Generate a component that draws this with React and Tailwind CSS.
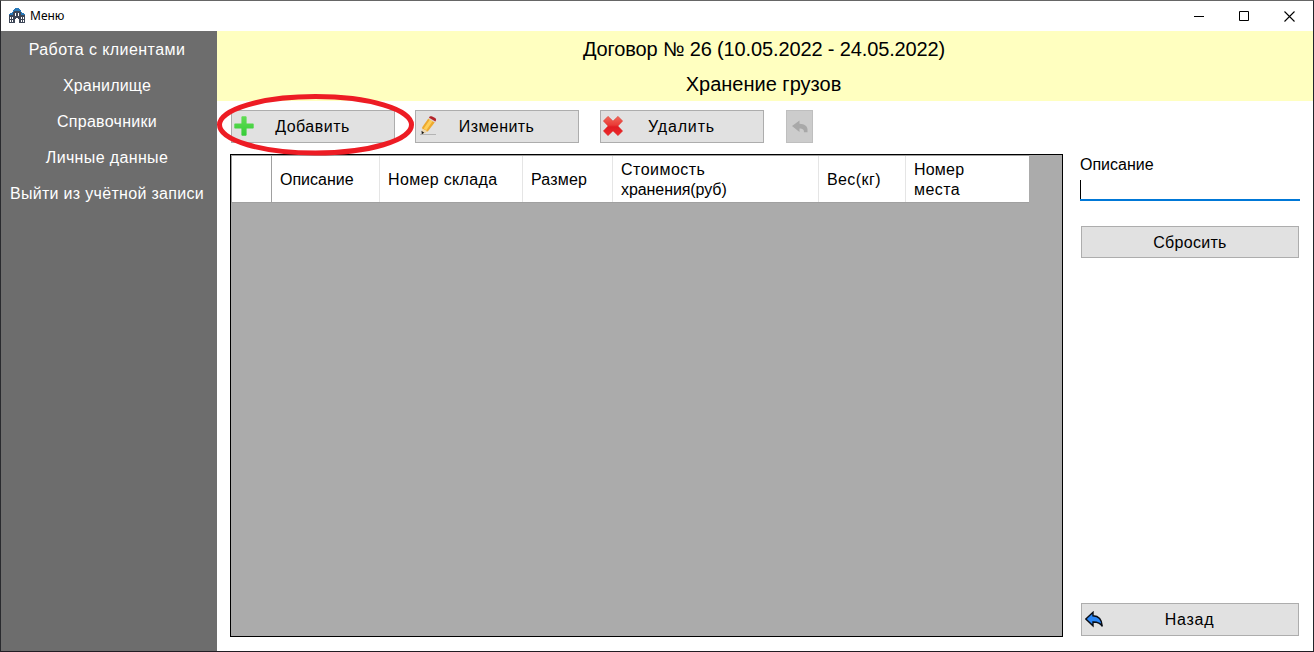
import React from "react";

const menu = [
  { label: "Работа с клиентами", cls: "tracking-[0.43px]" },
  { label: "Хранилище", cls: "tracking-[0.2px]" },
  { label: "Справочники", cls: "tracking-[0.3px]" },
  { label: "Личные данные", cls: "tracking-[0.36px]" },
  { label: "Выйти из учётной записи", cls: "tracking-[0.31px]" },
];

const columns = [
  { label: "Описание", cls: "w-[108px] border-r border-[#e5e5e5]" },
  { label: "Номер склада", cls: "w-[143px] border-r border-[#e5e5e5] tracking-[0.34px]" },
  { label: "Размер", cls: "w-[90px] border-r border-[#e5e5e5] tracking-[0.2px]" },
  { label: "Стоимость", second: "хранения(руб)", cls: "w-[206px] border-r border-[#e5e5e5]", firstCls: "tracking-[0.48px]", secondCls: "tracking-[-0.08px]" },
  { label: "Вес(кг)", cls: "w-[87px] border-r border-[#e5e5e5] tracking-[0.4px]" },
  { label: "Номер", second: "места", cls: "w-[123px]", firstCls: "tracking-[0.2px]", secondCls: "tracking-[0.45px]" },
];

function BuildingIcon() {
  return (
    <svg width="16" height="16" viewBox="0 0 16 16" shapeRendering="crispEdges">
      <path d="M5 1h6v3h1v3h4v8H0V7h4V4h1z" fill="#3d4657" />
      <path d="M6 0h4v1h1v1h1v2h-1V3H5v1H4V2h1V1h1zM3 4h1v1H3zM12 4h1v1h-1zM1 5h3v1H1zM12 5h3v1h-3zM0 6h4v1H0zM12 6h4v1h-4z" fill="#2878b8" />
      <path d="M6 5h1v3H6zM9 5h1v3H9zM1 9h1v2H1zM3 9h1v2H3zM12 9h1v2h-1zM14 9h1v2h-1zM1 12h1v2H1zM3 12h1v2H3zM12 12h1v2h-1zM14 12h1v2h-1zM7 10h2v1h1v4H6v-4h1z" fill="#fff" />
    </svg>
  );
}

function PlusIcon() {
  return (
    <svg width="20" height="20" viewBox="0 0 20 20">
      <defs>
        <linearGradient id="plus" x1="0" y1="0" x2="0" y2="1">
          <stop offset="0" stopColor="#62dd55" />
          <stop offset="1" stopColor="#35cc38" />
        </linearGradient>
      </defs>
      <path d="M8 0.3h4l.6.6v6.6h6.5l.6.6v3.8l-.6.6h-6.5v6.6l-.6.6H8l-.6-.6v-6.6H.9l-.6-.6V8.100l.6-.6h6.5V.9z" fill="url(#plus)" />
    </svg>
  );
}

function PencilIcon() {
  return (
    <svg width="18" height="20" viewBox="0 0 18 20">
      <path d="M0 18.500h16" stroke="#b4b4b4" strokeWidth="1" />
      <path d="M2 11.500L8.300 2.600l6.500 3.600L8 15.300 2 17.800z" fill="#eda92f" />
      <path d="M3.800 12.600L10 3.600l2.700 1.500-6.400 9.100z" fill="#ffcf58" />
      <path d="M1.900 12.200l5.600 3.100-5.500 2.600z" fill="#ecd8b4" />
      <path d="M1.500 14.800l2.700 1.900-2.400 1.500z" fill="#151515" />
      <path d="M8.300 2.700l.7-1 6.500 3.700-.7 1z" fill="#dfcfc4" />
      <path d="M9 1.800C9.500 0 11 0 12.200.5l3 1.600c1.200.8 1.100 2 .3 3.300z" fill="#b3242a" />
    </svg>
  );
}

function CrossIcon() {
  return (
    <svg width="20" height="20" viewBox="0 0 20 20">
      <defs>
        <linearGradient id="cross" x1="0" y1="0" x2="0" y2="1">
          <stop offset="0" stopColor="#f0695a" />
          <stop offset=".45" stopColor="#ea3a36" />
          <stop offset=".55" stopColor="#e01b22" />
          <stop offset="1" stopColor="#ee2a2c" />
        </linearGradient>
      </defs>
      <path d="M5 .3l5 4.700 5-4.700 4.700 4.700-4.700 5 4.700 5-4.700 4.700-5-4.700-5 4.700L.3 15 5 10 .3 5z" fill="url(#cross)" stroke="#d8423d" strokeWidth=".5" strokeLinejoin="round" />
    </svg>
  );
}

function UndoIcon() {
  return (
    <svg width="16" height="14" viewBox="0 0 16 14">
      <path d="M0 6L7.500.5V3.700C12.500 4 15.500 6 15.500 9.500v2.800h-3.600c.5-2.500-1.400-3.600-4.400-3.700v3.300z" fill="#a8a8a8" />
    </svg>
  );
}

function BackIcon() {
  return (
    <svg width="20" height="17" viewBox="0 0 20 17">
      <path d="M.8 8L8 1.300v3.500C13 5 16.800 8 17.300 15.300 15.500 12.300 13 10.800 8 11v3.800z" fill="#2a86f5" stroke="#080c14" strokeWidth="1.400" strokeLinejoin="miter" />
    </svg>
  );
}

function Button({ children, icon, className, textClass }) {
  return (
    <button className={"relative flex items-center justify-center border border-[#adadad] bg-[#e1e1e1] text-[16px] leading-[20px] " + className}>
      {icon}
      <span className={"whitespace-nowrap " + (textClass || "")}>{children}</span>
    </button>
  );
}

export default function App() {
  return (
    <div className="flex h-[652px] w-[1314px] flex-col overflow-hidden border border-t-[#666666] border-r-[#20242a] border-b-[#211d24] border-l-[#292a2e] bg-white font-['Liberation_Sans',sans-serif] text-black">
      <header className="flex h-[30px] shrink-0 items-center pl-2">
        <BuildingIcon />
        <span className="ml-[5px] font-['Noto_Sans','Open_Sans',sans-serif] text-[12px] leading-[16px]">Меню</span>
        <div className="ml-auto flex items-center">
          <div className="flex w-[46px] justify-center">
            <svg width="10" height="10" viewBox="0 0 10 10"><path d="M0 5.500h10" stroke="#000" /></svg>
          </div>
          <div className="flex w-[44px] justify-center">
            <svg width="10" height="10" viewBox="0 0 10 10"><path d="M.5.5h9v9h-9z" fill="none" stroke="#000" /></svg>
          </div>
          <div className="flex w-[47px] justify-center">
            <svg width="11" height="11" viewBox="0 0 11 11"><path d="M.5.500l10 10M10.500.5L.5 10.500" stroke="#000" strokeWidth="1.100" /></svg>
          </div>
        </div>
      </header>
      <div className="flex min-h-0 flex-1">
        <nav className="flex w-[216px] shrink-0 flex-col bg-[#6d6d6d] text-center text-[16px] text-white">
          {menu.map((m) => (
            <a key={m.label} className={"h-9 whitespace-nowrap pr-1 leading-[37px] " + m.cls}>{m.label}</a>
          ))}
        </nav>
        <main className="flex min-w-0 flex-1 flex-col">
          <div className="h-[70px] shrink-0 bg-[#ffffc0] text-center text-[20px]">
            <div className="h-[35px] pr-[2px] leading-[36px] tracking-[-0.13px]">Договор № 26 (10.05.2022 - 24.05.2022)</div>
            <div className="h-[35px] pr-[3px] leading-[36px]">Хранение грузов</div>
          </div>
          <div className="flex min-h-0 flex-1 justify-between pl-[13px] pr-[13px]">
            <section className="flex w-[833px] flex-col">
              <div className="flex h-[53px] items-start pl-px pt-[9px]">
                <div className="relative">
                  <Button className="h-[33px] w-[164px]" textClass="pr-px tracking-[0.5px]" icon={<span className="absolute left-[2px] top-[5px]"><PlusIcon /></span>}>
                    Добавить
                  </Button>
                  <svg className="absolute -left-[15px] -top-[17px] z-10" width="200" height="64" viewBox="0 0 200 64">
                    <ellipse cx="99.500" cy="31.800" rx="96" ry="28.200" fill="none" stroke="#ed1c24" strokeWidth="5" />
                  </svg>
                </div>
                <Button className="ml-5 h-[33px] w-[164px]" textClass="pr-px tracking-[0.4px]" icon={<span className="absolute left-[4px] top-[5px]"><PencilIcon /></span>}>
                  Изменить
                </Button>
                <Button className="ml-[21px] h-[33px] w-[164px]" textClass="pr-px tracking-[0.85px]" icon={<span className="absolute left-[2px] top-[5px]"><CrossIcon /></span>}>
                  Удалить
                </Button>
                <button className="ml-[22px] flex h-[33px] w-[27px] items-center justify-center border border-[#bfbfbf] bg-[#cccccc]">
                  <UndoIcon />
                </button>
              </div>
              <div className="h-[483px] border border-black bg-[#ababab]">
                <div className="flex h-[48px] w-[798px] border-b border-l border-t border-[#a0a0a0] bg-white text-[16px] leading-[20px]">
                  <div className="w-[40px] shrink-0 border-r border-[#a0a0a0]" />
                  {columns.map((c) => (
                    <div key={c.label} className={"flex shrink-0 flex-col justify-center pl-2 pt-px " + c.cls}>
                      <span className={c.firstCls}>{c.label}</span>
                      {c.second && <span className={c.secondCls}>{c.second}</span>}
                    </div>
                  ))}
                </div>
              </div>
            </section>
            <aside className="flex w-[220px] flex-col pt-[54px]">
              <label className="text-[16px] leading-[20px]">Описание</label>
              <div className="mt-[4px] flex h-[22px] border-b-2 border-[#0078d7]">
                <span className="mt-px h-[19px] w-px bg-black" />
              </div>
              <Button className="mx-px mt-[25px] h-[32px] pt-px" textClass="tracking-[0.3px]">Сбросить</Button>
              <Button className="mx-px mb-[15px] mt-auto h-[33px]" textClass="pr-px tracking-[0.7px]" icon={<span className="absolute left-[3px] top-[7px]"><BackIcon /></span>}>
                Назад
              </Button>
            </aside>
          </div>
        </main>
      </div>
    </div>
  );
}
